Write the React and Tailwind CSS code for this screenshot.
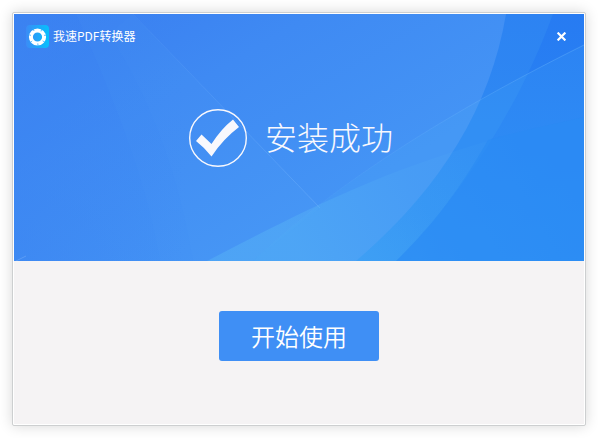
// src/App.jsx
const Backdrop = () => (
    <svg
        className="absolute inset-0 h-full w-full"
        viewBox="0 0 570 247"
        preserveAspectRatio="none"
        aria-hidden="true"
    >
        <defs>
            <linearGradient id="base" x1="0" y1="0" x2="0" y2="1">
                <stop offset="0" stopColor="#277bf2" />
                <stop offset="1" stopColor="#2a8bf4" />
            </linearGradient>
            <linearGradient id="disc" gradientUnits="userSpaceOnUse" x1="40" y1="-10" x2="200" y2="260">
                <stop offset="0" stopColor="#397df0" />
                <stop offset="0.45" stopColor="#3f8af3" />
                <stop offset="1" stopColor="#4494f5" />
            </linearGradient>
            <linearGradient id="left" x1="0" y1="0" x2="1" y2="0">
                <stop offset="0" stopColor="#3c86f2" stopOpacity="0.6" />
                <stop offset="0.35" stopColor="#3c86f2" stopOpacity="0" />
            </linearGradient>
            <linearGradient id="glow" gradientUnits="userSpaceOnUse" x1="290" y1="247" x2="520" y2="110">
                <stop offset="0" stopColor="#5cbcf6" stopOpacity="0.36" />
                <stop offset="0.5" stopColor="#5cbcf6" stopOpacity="0.12" />
                <stop offset="1" stopColor="#5cbcf6" stopOpacity="0" />
            </linearGradient>
            <linearGradient id="ray" gradientUnits="userSpaceOnUse" x1="119" y1="0" x2="306" y2="194">
                <stop offset="0" stopColor="#8cc4ff" stopOpacity="0.06" />
                <stop offset="1" stopColor="#8cc4ff" stopOpacity="0.28" />
            </linearGradient>
            <linearGradient id="rim" gradientUnits="userSpaceOnUse" x1="239" y1="247" x2="570" y2="31">
                <stop offset="0" stopColor="#7cc4ff" stopOpacity="0" />
                <stop offset="1" stopColor="#7cc4ff" stopOpacity="0.32" />
            </linearGradient>
        </defs>

        <rect width="570" height="247" fill="url(#base)" />
        {/* Círculos grandes */}
        <path d="M0 0H539C508 85 455 175 382 247H0Z" fill="#46a4f6" fillOpacity="0.2" />
        <path d="M0 0H492C476 95 425 176 342 247H0Z" fill="url(#disc)" />
        <path d="M0 0H492C476 95 425 176 342 247H0Z" fill="url(#left)" />
        {/* Haces de la izquierda */}
        <path d="M62 0C95 75 132 160 146 247H239L306 194L119 0Z" fill="#60a8ff" fillOpacity="0.05" />
        <path d="M95 20C140 90 165 165 179 247H239L306 194L119 0Z" fill="#60b0ff" fillOpacity="0.04" />
        <path d="M119 0L306 194" fill="none" stroke="url(#ray)" />
        {/* Onda inferior */}
        <path d="M239 247C310 180 415 108 570 31V247Z" fill="#4cacf8" fillOpacity="0.16" />
        <path d="M193 247C300 192 390 142 570 103V247Z" fill="url(#glow)" />
        <path d="M239 247C310 180 415 108 570 31" fill="none" stroke="url(#rim)" />
        <path d="M570 103C530 112 500 119 474 126C440 186 410 220 382 247H570Z" fill="#2a8af4" fillOpacity="0.6" />
        <path d="M2 247L12 242" stroke="#9cc8ff" strokeOpacity="0.3" />
    </svg>
);

const Logo = () => (
    <svg className="size-[23px]" viewBox="0 0 23 23" aria-hidden="true">
        <defs>
            <linearGradient id="logo" x1="0" y1="0" x2="1" y2="0">
                <stop offset="0" stopColor="#3b8cf6" />
                <stop offset="1" stopColor="#06c0fd" />
            </linearGradient>
        </defs>
        <rect width="23" height="23" rx="4" fill="url(#logo)" />
        <circle cx="11.5" cy="12" r="6.6" fill="none" stroke="#fff" strokeWidth="4" />
        <g stroke="#35b0fa" strokeWidth="0.8">
            <path d="M7 3.2L8 6M15.8 3.8L15 6.4M20.4 10L18 10.4M18.6 17L16.6 15.8M12 20.8L11.8 18.4M4.4 17.6L6.2 16M2.6 9.6L5 10.4" />
        </g>
    </svg>
);

const CheckIcon = () => (
    <svg className="size-[58px] shrink-0" viewBox="0 0 58 58" aria-hidden="true">
        <circle cx="29" cy="29" r="28.3" fill="none" stroke="#f8f8fd" strokeWidth="1.4" />
        <path d="M7 32L12.5 25.5L22.5 35Q32 20 44 10.5L50 18Q34 30 22.5 47.5Q16 39 7 32Z" fill="#f8f8fd" />
    </svg>
);

export default function App() {
    return (
        <main className="min-h-screen bg-white p-3 font-['Noto_Sans_CJK_SC',sans-serif]">
            <section className="rounded-[2px] border border-[#cdcfd0] bg-white p-px shadow-[0_0_14px_rgba(0,0,0,0.16)]">
                <div className="relative">
                    <Backdrop />
                    <div className="relative text-white">
                        <header className="flex h-11 items-center justify-between pl-3 pr-4">
                            <div className="flex items-center gap-1">
                                <Logo />
                                <h1 className="text-[12px] leading-4">我速PDF转换器</h1>
                            </div>
                            <button type="button" aria-label="关闭" className="p-0.5">
                                <svg className="size-[9px]" viewBox="0 0 9 9" stroke="#fff" strokeWidth="2.2">
                                    <path d="M0.6 0.6L8.4 8.4M8.4 0.6L0.6 8.4" />
                                </svg>
                            </button>
                        </header>

                        <div className="flex items-center justify-center gap-[18px] pt-[51px] pr-4 pb-[94px]">
                            <CheckIcon />
                            <p className="pb-1 text-[32px] leading-[48px] font-light text-[#f8f8fd]">安装成功</p>
                        </div>
                    </div>
                </div>

                <div className="flex justify-center bg-[#f5f3f4] pt-[50px] pb-[63px]">
                    <button
                        type="button"
                        className="h-[50px] w-40 rounded-[3px] bg-[#3f8ff5] text-[24px] leading-8 font-[350] text-white"
                    >
                        开始使用
                    </button>
                </div>
            </section>
        </main>
    );
}
